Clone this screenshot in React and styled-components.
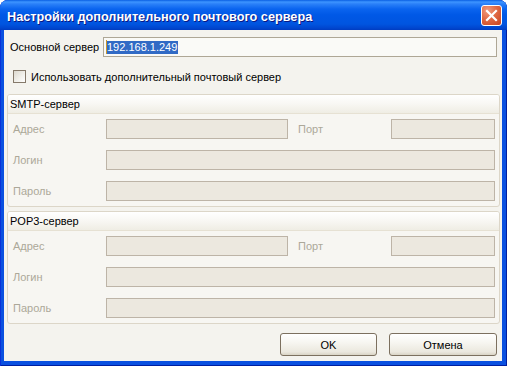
import React from "react";
import styled, { createGlobalStyle } from "styled-components";

const Global = createGlobalStyle`
  html, body { margin: 0; padding: 0; background: #ffffff; }
  body { font-family: "Liberation Sans", Arial, sans-serif; font-size: 11px; }
  * { box-sizing: border-box; }
`;

const Window = styled.div`
  width: 507px;
  height: 366px;
  display: flex;
  flex-direction: column;
  border-radius: 8px 8px 0 0;
  overflow: hidden;
  background: #0a50e0;
  box-shadow: inset 1px 0 #0831d9, inset -1px 0 #001ea0, inset 0 -1px #001ea0;
`;

const TitleBar = styled.div`
  height: 30px;
  flex: none;
  display: flex;
  align-items: center;
  padding: 3px 6px 0 7px;
  background: linear-gradient(
    to bottom,
    #0a5fe3 0px,
    #3d95ff 2px,
    #2a80f8 4px,
    #0a64ef 9px,
    #0058e6 15px,
    #0055e0 24px,
    #0046cf 28px,
    #003cc0 30px
  );
`;

const Title = styled.div`
  flex: 1;
  color: #ffffff;
  font-family: "Liberation Sans", Arial, sans-serif;
  font-weight: bold;
  font-size: 12.7px;
  text-shadow: 1px 1px 0 #0a1883;
  white-space: nowrap;
`;

const CloseButton = styled.div`
  width: 21px;
  height: 21px;
  margin-top: -3px;
  margin-right: -1px;
  border: 1px solid #ffffff;
  border-radius: 3px;
  background: radial-gradient(circle at 30% 25%, #f09b7e 0%, #e06a45 45%, #c9431f 100%);
  display: flex;
  align-items: center;
  justify-content: center;
`;

const Client = styled.div`
  flex: 1;
  margin: 0 5px 5px 4px;
  background: #f4f3ee;
  display: flex;
  flex-direction: column;
  padding-top: 7px;
  color: #000000;
`;

const MainRow = styled.div`
  display: flex;
  align-items: center;
  height: 20px;
  padding: 0 5px 0 6px;
`;

const MainLabel = styled.div`
  width: 93px;
  flex: none;
  white-space: nowrap;
`;

const EditBox = styled.div`
  flex: 1;
  height: 20px;
  border: 1px solid #aea796;
  background: #fafaf7;
  display: flex;
  align-items: center;
  padding-left: 2px;
`;

const Caret = styled.span`
  width: 1px;
  height: 14px;
  background: #c8962e;
`;

const Selected = styled.span`
  background: #316ac5;
  color: #ffffff;
  line-height: 13px;
  padding: 0 1px 0 0;
`;

const CheckRow = styled.div`
  display: flex;
  align-items: center;
  margin-top: 13px;
  padding-left: 9px;
  height: 13px;
  gap: 5px;
`;

const CheckBox = styled.div`
  width: 13px;
  height: 13px;
  border: 1px solid #85796a;
  background: linear-gradient(135deg, #dcd8ce 0%, #f2f1ec 60%, #ffffff 100%);
`;

const Panel = styled.div`
  margin: ${(p) => p.$top}px 2px 0 3px;
  border: 1px solid #dcd6c8;
  border-radius: 3px;
  background: #f7f6f2;
  display: flex;
  flex-direction: column;
`;

const PanelHeader = styled.div`
  height: 19px;
  padding-left: 2px;
  display: flex;
  align-items: center;
  border-bottom: 1px solid #e6e1d3;
  background: linear-gradient(to bottom, #ffffff 0%, #f8f7f3 50%, #efede4 100%);
  border-radius: 2px 2px 0 0;
`;

const PanelBody = styled.div`
  display: flex;
  flex-direction: column;
  gap: 11px;
  padding: 5px 4px 5px 5px;
`;

const FieldRow = styled.div`
  display: flex;
  align-items: center;
  height: 20px;
`;

const FieldLabel = styled.div`
  width: ${(p) => p.$w}px;
  margin-left: ${(p) => p.$ml || 0}px;
  flex: none;
  color: #aca899;
  white-space: nowrap;
`;

const DisabledInput = styled.div`
  height: 20px;
  border: 1px solid #bdb4a7;
  background: #ece8df;
  ${(p) => (p.$w ? `width: ${p.$w}px; flex: none;` : "flex: 1;")}
`;

const ButtonBar = styled.div`
  margin-top: 9px;
  display: flex;
  justify-content: flex-end;
  gap: 12px;
  padding-right: 5px;
`;

const Button = styled.div`
  width: ${(p) => p.$w}px;
  height: 23px;
  border: 1px solid #7c705f;
  border-radius: 3px;
  background: linear-gradient(to bottom, #ffffff 0%, #f7f6f1 40%, #ebe8de 85%, #d9d4c6 100%);
  display: flex;
  align-items: center;
  justify-content: center;
  color: #000000;
  font-weight: normal;
`;

function ServerPanel({ title, top }) {
  return (
    <Panel $top={top}>
      <PanelHeader>{title}</PanelHeader>
      <PanelBody>
        <FieldRow>
          <FieldLabel $w={93}>Адрес</FieldLabel>
          <DisabledInput $w={182} />
          <FieldLabel $w={93} $ml={10}>Порт</FieldLabel>
          <DisabledInput />
        </FieldRow>
        <FieldRow>
          <FieldLabel $w={93}>Логин</FieldLabel>
          <DisabledInput />
        </FieldRow>
        <FieldRow>
          <FieldLabel $w={93}>Пароль</FieldLabel>
          <DisabledInput />
        </FieldRow>
      </PanelBody>
    </Panel>
  );
}

export default function App() {
  return (
    <>
      <Global />
      <Window>
        <TitleBar>
          <Title>Настройки дополнительного почтового сервера</Title>
          <CloseButton>
            <svg width="13" height="13" viewBox="0 0 13 13">
              <path d="M2 2 L11 11 M11 2 L2 11" stroke="#ffffff" strokeWidth="2.2" strokeLinecap="square" />
            </svg>
          </CloseButton>
        </TitleBar>
        <Client>
          <MainRow>
            <MainLabel>Основной сервер</MainLabel>
            <EditBox>
              <Caret />
              <Selected>192.168.1.249</Selected>
            </EditBox>
          </MainRow>
          <CheckRow>
            <CheckBox />
            <span>Использовать дополнительный почтовый сервер</span>
          </CheckRow>
          <ServerPanel title="SMTP-сервер" top={11} />
          <ServerPanel title="POP3-сервер" top={4} />
          <ButtonBar>
            <Button $w={97}>OK</Button>
            <Button $w={108}>Отмена</Button>
          </ButtonBar>
        </Client>
      </Window>
    </>
  );
}
